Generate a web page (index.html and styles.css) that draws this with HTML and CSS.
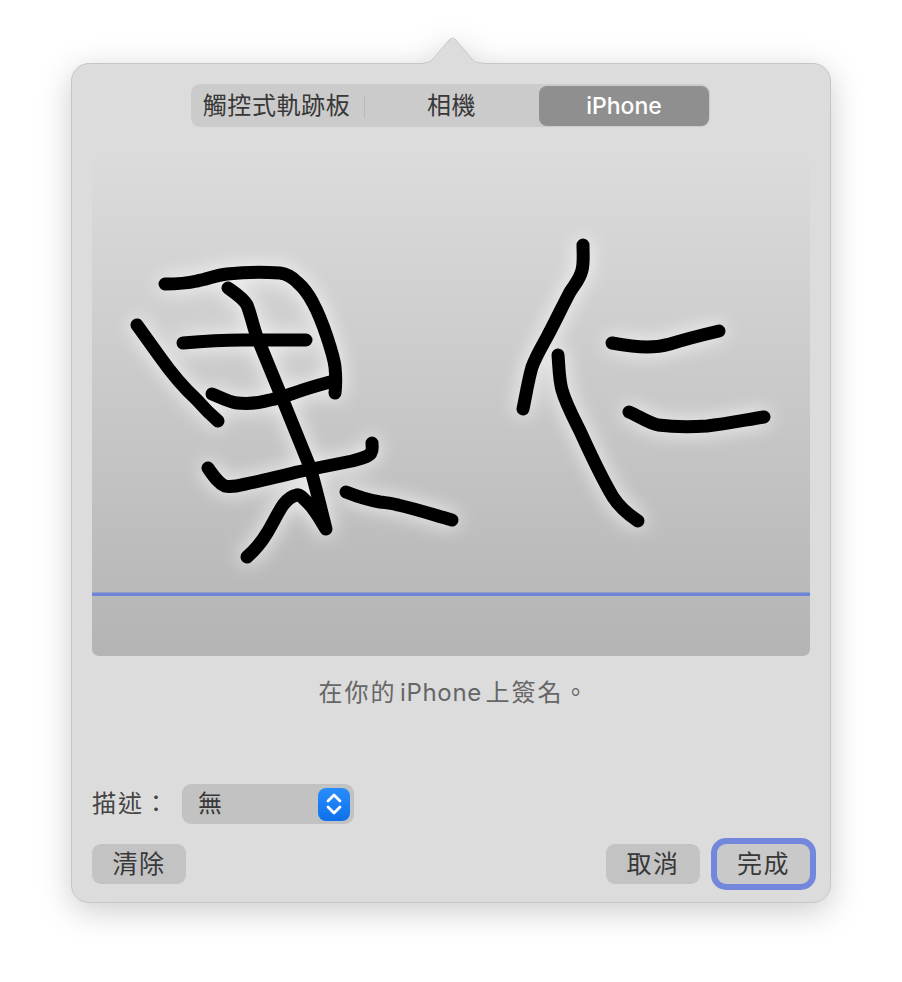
FILE: index.html
```html
<!DOCTYPE html>
<html lang="zh-Hant">
<head>
<meta charset="utf-8">
<title>簽名</title>
<link rel="stylesheet" href="styles.css">
</head>
<body>
<div class="stage">
  <div class="popover-wrap">
    <svg class="arrow" width="60" height="27" viewBox="0 0 60 27" aria-hidden="true">
      <path class="arrow-fill" d="M0 26 C4 26 7 25 10 22 L26 3 C28 .6 31 .6 33 3 L48 21 C51 25 54 26 60 26 L60 28 L0 28 Z"/>
      <path class="arrow-line" d="M0 26 C4 26 7 25 10 22 L26 3 C28 .6 31 .6 33 3 L48 21 C51 25 54 26 60 26"/>
    </svg>
    <div class="popover">
      <div class="segmented">
        <div class="segment segment-divided">觸控式軌跡板</div>
        <div class="segment">相機</div>
        <div class="segment segment-active">iPhone</div>
      </div>
      <div class="canvas">
        <svg class="drawing" width="718" height="505" viewBox="92 151 718 505" aria-hidden="true">
          <rect class="baseline" x="92" y="592.5" width="718" height="3.5"/>
          <g class="ink">
            <path d="M165 284 C178 284 188 283 197 281 C208 279 216 275 227 274 C245 272 265 272 280 273 C288 274 292 277 297 282 C304 288 309 295 313 303 C319 314 323 325 327 337 C331 349 334 358 335 367 C336 377 336 385 335 393"/>
            <path d="M228 288 C235 293 243 298 247 305 C251 315 253 326 257 337 L280 393 L310 467 C316 488 321 509 326 529 C321 521 315 510 308 503 C304 499 300 494 297 495 C291 496 286 501 283 505 C277 514 272 525 267 533 C261 543 255 550 247 557"/>
            <path d="M183 343 C205 341 225 340 243 340 L306 340"/>
            <path d="M137 325 L160 357 C172 374 184 388 197 400 C204 408 211 415 218 421"/>
            <path d="M212 394 C220 397 228 402 237 403 C248 404 260 403 270 400 C280 398 288 395 297 392 C308 388 319 385 330 382"/>
            <path d="M208 468 C213 475 218 483 225 486 C232 488 241 485 250 483 C265 480 281 476 297 472 L352 461 C360 459 368 457 371 453 C373 450 372 446 372 443"/>
            <path d="M346 492 C356 496 368 500 380 502 C388 503 392 503 398 505 C416 509 434 515 452 520"/>
            <path d="M583 245 C583 254 584 262 582 270 C580 279 575 284 570 292 C562 307 555 322 547 337 C541 348 536 356 532 367 C528 381 526 395 523 409"/>
            <path d="M558 355 C559 367 559 379 562 390 C566 404 573 417 580 431 C590 453 601 477 613 497 C620 508 629 515 638 521"/>
            <path d="M612 343 C623 345 635 347 647 347 C655 347 663 346 670 344 C686 339 702 335 719 331"/>
            <path d="M629 412 C639 416 648 423 658 425 C674 427 691 427 707 426 C726 424 745 420 764 417"/>
          </g>
        </svg>
      </div>
      <p class="caption">在你的 <span class="caption-latin">iPhone</span> 上簽名。</p>
      <div class="description">
        <span class="label">描述：</span>
        <div class="select">
          <span class="select-value">無</span>
          <span class="stepper">
            <svg width="20" height="28" viewBox="0 0 20 28" aria-hidden="true">
              <path d="M4 11 L10 5 L16 11"/>
              <path d="M4 17 L10 23 L16 17"/>
            </svg>
          </span>
        </div>
      </div>
      <div class="actions">
        <button class="btn" type="button">清除</button>
        <div class="actions-right">
          <button class="btn" type="button">取消</button>
          <button class="btn btn-default" type="button">完成</button>
        </div>
      </div>
    </div>
  </div>
</div>
</body>
</html>
```
FILE: styles.css
```css
* { box-sizing: border-box; }

html, body {
  margin: 0;
  height: 982px;
  overflow: hidden;
  background: #fff;
}

body {
  font-family: "Noto Sans CJK TC", "Inter", sans-serif;
  color: #383838;
}

.stage {
  padding: 63px 71px 0;
}

.popover-wrap {
  position: relative;
  width: 760px;
  filter: drop-shadow(0 8px 16px rgba(0, 0, 0, .2));
}

.arrow {
  position: absolute;
  left: 352px;
  top: -26px;
  z-index: 1;
  display: block;
}

.arrow-fill { fill: #dcdcdc; }
.arrow-line { fill: none; stroke: #c8c8c8; stroke-width: 1; }

.popover {
  height: 840px;
  padding: 20px 20px 0;
  background: #dcdcdc;
  border: 1px solid #c6c6c6;
  border-radius: 18px;
  display: flex;
  flex-direction: column;
}

.segmented {
  align-self: center;
  width: 519px;
  height: 43px;
  padding: 2px 1px 1px 1px;
  background: #cbcbcb;
  border-radius: 9px;
  display: grid;
  grid-template-columns: 173px 174px 170px;
  font-size: 24px;
  letter-spacing: .6px;
  margin-left: -1px;
}

.segment {
  position: relative;
  display: flex;
  align-items: center;
  justify-content: center;
  line-height: 1;
  padding: 0 1px 4px 0;
}

.segment-divided {
  padding-right: 4px;
}

.segment-divided::after {
  content: "";
  position: absolute;
  right: 0;
  top: 10px;
  width: 1px;
  height: 22px;
  background: #bababa;
}

.segment-active {
  background: #8f8f8f;
  color: #fff;
  border-radius: 8px;
  font-family: "Inter", sans-serif;
  font-size: 23px;
  font-weight: 500;
  letter-spacing: 0;
  padding: 0;
}

.canvas {
  margin-top: 24px;
  height: 505px;
  border-radius: 0 0 7px 7px;
  overflow: hidden;
  background: linear-gradient(#dcdcdc 0%, #b4b4b4 100%);
}

.drawing { display: block; }

.baseline { fill: #6f86d8; }

.ink {
  fill: none;
  stroke: #000;
  stroke-width: 13;
  stroke-linecap: round;
  stroke-linejoin: round;
  filter: drop-shadow(0 0 10px rgba(255, 255, 255, .9));
}

.caption {
  margin: 19px 0 0;
  height: 32px;
  padding-left: 6px;
  text-align: center;
  font-size: 24px;
  line-height: 32px;
  letter-spacing: 2px;
  word-spacing: -4px;
  color: #666;
}

.caption-latin {
  font-family: "Inter", sans-serif;
  letter-spacing: .7px;
}

.description {
  margin-top: 77px;
  display: flex;
  align-items: center;
  gap: 14px;
  height: 40px;
}

.label {
  width: 76px;
  font-size: 24px;
  line-height: 1;
  padding-bottom: 4px;
  letter-spacing: 2px;
  color: #444;
  white-space: nowrap;
}

.select {
  width: 172px;
  height: 40px;
  padding: 0 4px 0 16px;
  background: #c2c2c2;
  border-radius: 9px;
  display: flex;
  align-items: center;
  justify-content: space-between;
}

.select-value {
  font-size: 24px;
  line-height: 1;
  padding-bottom: 4px;
}

.stepper {
  width: 32px;
  height: 33px;
  border-radius: 8px;
  background: linear-gradient(#2a8dfd, #0c70ea);
  display: flex;
  align-items: center;
  justify-content: center;
}

.stepper path {
  fill: none;
  stroke: #fff;
  stroke-width: 2.8;
  stroke-linecap: round;
  stroke-linejoin: round;
}

.actions {
  margin-top: 20px;
  display: flex;
  justify-content: space-between;
  align-items: center;
}

.actions-right {
  display: flex;
  gap: 17px;
}

.btn {
  width: 94px;
  height: 40px;
  padding: 0 0 4px;
  border: 0;
  border-radius: 9px;
  background: #c3c3c3;
  color: #383838;
  font-family: inherit;
  font-size: 25px;
  letter-spacing: 1.5px;
  line-height: 1;
}

.btn-default {
  width: 93px;
  background: #c9c9c9;
  box-shadow: 0 0 0 6px #7387dd;
}
```
